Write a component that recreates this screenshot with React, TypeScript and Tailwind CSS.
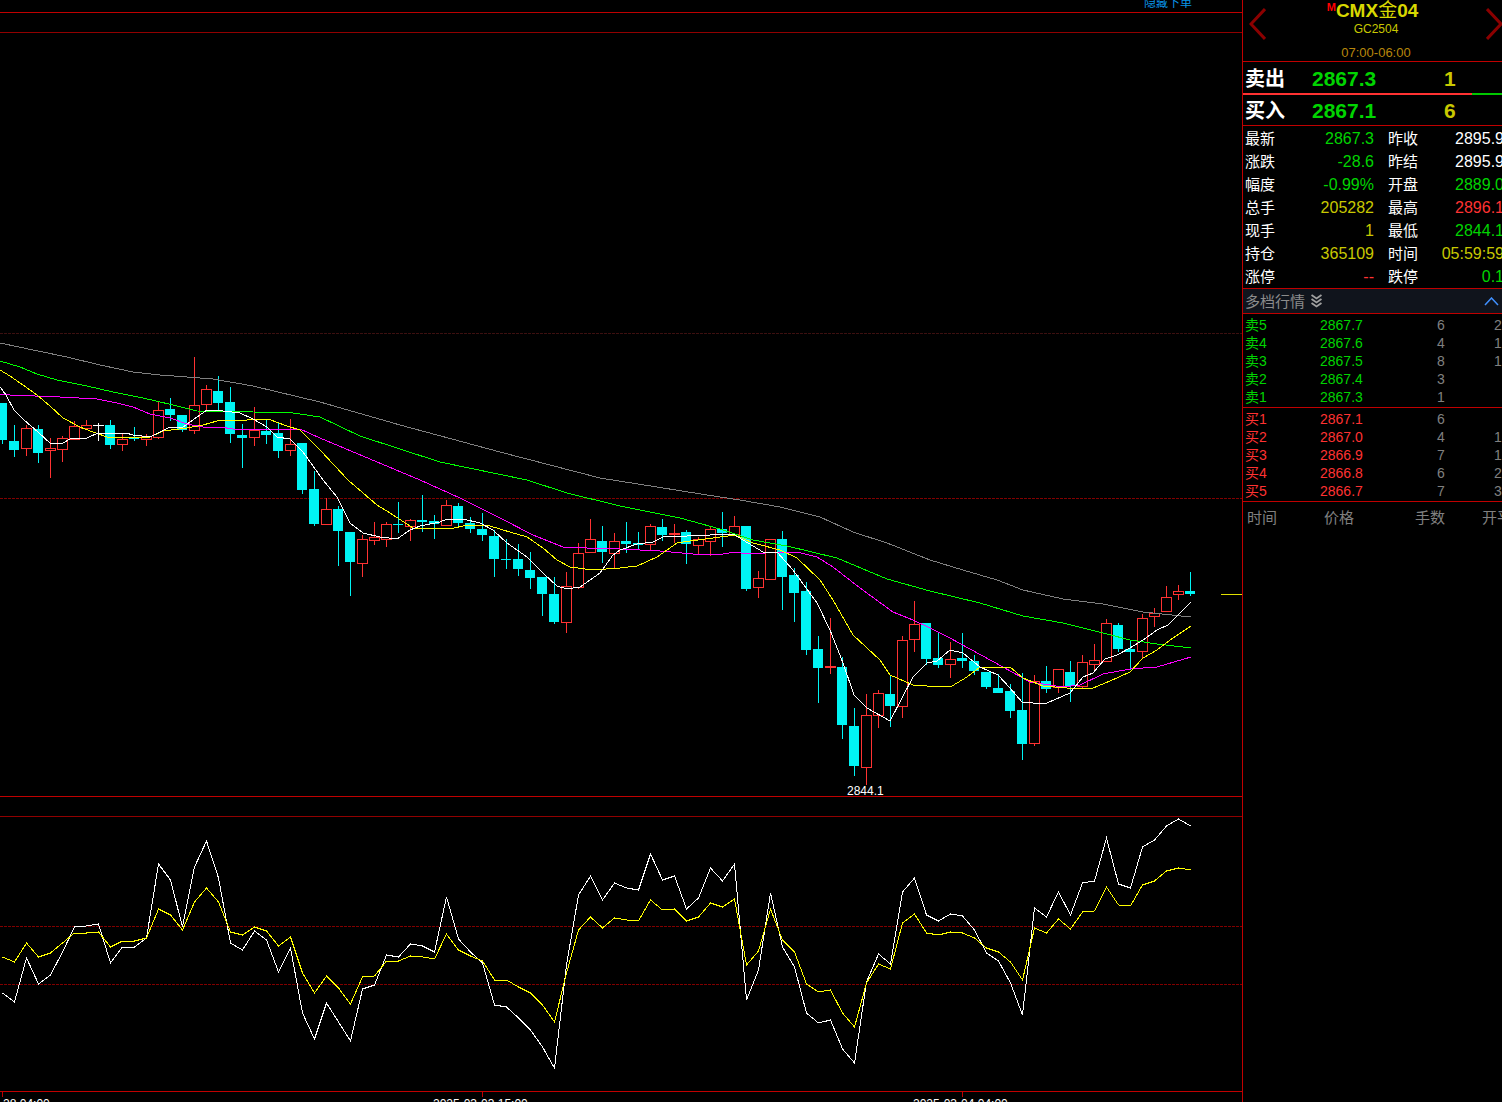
import React from "react";

const LATIN = "font-['Liberation_Sans','Noto_Sans_CJK_SC',sans-serif]";

type Candle = [string, number, number, number, number];
const candles: Candle[] = [
  ["c",403,440,403,444],["c",441,450,425,457],["r",428,449,425,456],["c",429,453,425,463],["r",448,451,438,478],
  ["r",438,450,436,462],["r",426,440,421,440],["r",425,429,420,429],["w",425,426,423,441],["c",425,445,420,449],
  ["r",439,445,434,451],["c",437,439,427,441],["r",436,440,434,446],["r",410,438,401,439],["c",409,415,398,421],
  ["c",415,430,415,432],["r",405,431,357,434],["r",389,405,385,411],["c",391,403,376,412],["c",402,434,387,443],
  ["c",435,438,424,468],["r",430,438,407,446],["c",431,435,420,444],["c",433,451,422,458],["r",444,451,419,456],
  ["c",443,490,443,494],["c",489,524,471,526],["r",509,525,498,525],["c",509,531,506,566],["c",532,562,532,596],
  ["r",539,564,535,577],["r",537,541,522,545],["r",524,540,522,547],["c",524,525,502,533],["r",520,527,519,541],
  ["c",520,522,495,532],["c",521,524,515,539],["r",505,526,500,526],["c",506,523,503,526],["c",523,529,517,533],
  ["c",529,535,513,541],["c",536,559,530,577],["c",559,560,539,569],["c",559,569,544,576],["c",570,578,552,589],
  ["c",577,594,577,616],["c",594,622,577,624],["r",586,623,572,633],["r",553,588,543,589],["r",539,553,519,553],
  ["c",541,552,526,563],["r",541,554,533,568],["c",541,544,522,553],["c",543,545,532,550],["r",526,545,524,550],
  ["c",527,535,519,541],["r",533,535,524,543],["c",532,544,530,564],["r",539,546,537,554],["r",529,542,526,556],
  ["c",529,533,512,547],["r",526,535,516,535],["c",526,589,526,591],["r",578,588,571,598],["r",539,580,539,580],
  ["c",539,577,531,610],["c",575,593,568,622],["c",591,650,582,655],["c",649,668,636,703],["r",666,667,618,674],
  ["c",667,725,657,739],["c",726,766,708,776],["r",715,768,694,785],["r",693,716,690,728],["c",694,706,675,727],
  ["r",640,707,636,718],["r",624,640,601,652],["c",623,659,623,665],["c",658,665,632,668],["r",659,665,642,678],
  ["c",658,661,633,668],["c",661,671,655,675],["c",672,687,672,689],["c",688,693,674,693],["c",691,711,684,718],
  ["c",710,744,673,760],["r",681,744,675,746],["c",681,689,666,693],["r",669,688,669,693],["c",672,686,661,702],
  ["r",662,687,655,689],["r",660,665,644,670],["r",623,662,619,662],["c",625,649,623,652],["c",649,652,640,670],
  ["r",618,652,614,658],["r",613,617,608,627],["r",597,612,586,612],["r",591,595,585,600],["c",591,594,572,596],
];

const maWhite = "0,387 6,395 14,410 24,420 38,432 51,444 63,443 70,439 87,438 98,433 126,433 133,435 150,437 170,427 183,427 197,417 207,410 223,411 240,413 253,419 267,427 277,437 290,439 303,452 323,480 337,497 350,523 363,533 380,537 397,539 410,530 420,526 440,522 447,519 463,519 480,523 493,530 507,543 527,557 543,573 557,586 567,589 580,587 600,573 613,555 620,550 637,544 653,542 663,537 687,536 733,534 743,540 763,552 777,552 793,570 817,603 830,630 843,663 854,695 867,708 890,721 913,677 927,663 937,661 950,650 963,653 980,667 998,675 1010,688 1022,702 1033,703 1047,703 1070,693 1083,677 1093,673 1105,659 1117,655 1130,648 1143,640 1157,630 1168,625 1191,602";
const maYellow = "0,370 10,376 23,385 37,395 50,406 63,418 80,427 93,432 110,438 123,437 150,437 163,431 187,428 203,425 217,421 247,420 268,419 287,426 300,430 320,450 348,480 363,493 377,505 390,513 413,528 450,529 467,525 487,525 503,530 527,537 543,548 557,560 570,567 593,570 620,568 637,566 657,557 677,543 690,541 713,538 735,535 753,543 780,550 797,558 820,580 833,600 853,635 880,660 890,675 913,685 940,687 952,686 967,677 980,667 1010,667 1023,678 1043,686 1067,688 1093,688 1110,681 1130,672 1143,658 1157,650 1170,640 1191,626";
const maMagenta = "0,394 10,395 60,397 97,399 117,403 133,407 150,414 170,418 187,424 203,427 220,427 233,429 300,429 320,438 420,480 460,498 500,518 533,535 563,547 587,548 620,549 660,551 693,554 723,554 735,552 747,554 783,552 797,552 817,557 833,567 860,588 893,612 913,620 930,628 950,638 970,649 1003,667 1030,682 1063,687 1080,685 1103,674 1130,669 1157,667 1191,657";
const maGreen = "0,361 20,367 37,374 57,380 87,386 113,392 143,398 173,405 197,411 253,412 293,413 320,417 360,436 440,462 527,480 567,493 620,506 680,518 720,529 753,540 787,546 837,558 887,579 930,591 980,603 1023,616 1063,623 1103,633 1130,640 1157,644 1191,648";
const maGray = "0,343 33,350 67,357 100,365 133,372 160,375 187,377 213,379 253,386 320,402 400,425 500,452 600,478 720,497 740,500 780,507 820,517 853,532 887,543 930,560 963,570 997,580 1023,590 1063,599 1103,604 1143,612 1191,617";

const oscWhite = [993,1002,958,984,975,952,927,926,924,963,947,947,938,864,880,927,867,841,878,943,950,931,940,972,948,1013,1039,1003,1022,1041,989,985,955,957,944,946,952,897,939,952,963,1005,1007,1018,1030,1047,1068,965,895,876,900,883,888,890,854,880,876,909,898,868,881,864,1000,970,893,947,967,1013,1023,1020,1049,1063,982,954,964,892,878,915,921,914,916,930,953,961,983,1015,908,917,892,915,883,881,838,884,888,847,840,826,819,826];
const oscYellow = [957,962,943,957,953,943,933,933,932,947,941,941,938,909,915,930,902,888,902,932,935,927,931,946,937,973,993,976,988,1004,977,976,961,961,956,957,959,934,950,956,961,980,980,987,993,1005,1022,973,930,917,928,918,920,921,900,910,909,921,917,903,907,899,965,951,909,940,952,984,992,990,1013,1027,983,964,969,923,914,933,935,932,933,938,948,952,962,980,928,933,919,929,912,911,887,905,906,885,881,871,868,870];
const toPts = (a: number[]) => a.map((y, i) => `${2.5 + 12 * i},${y}`).join(" ");

const RED = "#ff3232";
const CYAN = "#00f4f4";

function Chart() {
  return (
    <svg width={1242} height={1102} className="block" shapeRendering="crispEdges">
      <line x1={0} x2={1242} y1={12.5} y2={12.5} stroke="#c00000" />
      <line x1={0} x2={1242} y1={32.5} y2={32.5} stroke="#900000" />
      <line x1={0} x2={1242} y1={333.5} y2={333.5} stroke="#3c1010" strokeDasharray="3 1" />
      <line x1={0} x2={1242} y1={498.5} y2={498.5} stroke="#800000" strokeDasharray="3 1" />
      <line x1={0} x2={1242} y1={796.5} y2={796.5} stroke="#c00000" />
      <line x1={0} x2={1242} y1={816.5} y2={816.5} stroke="#900000" />
      <line x1={0} x2={1242} y1={926.5} y2={926.5} stroke="#800000" strokeDasharray="3 1" />
      <line x1={0} x2={1242} y1={984.5} y2={984.5} stroke="#800000" strokeDasharray="3 1" />
      <line x1={0} x2={1242} y1={1091.5} y2={1091.5} stroke="#c00000" />
      {[2, 482, 962].map((x) => (
        <line key={x} x1={x + 0.5} x2={x + 0.5} y1={1091} y2={1097} stroke="#c00000" />
      ))}
      {candles.map(([k, top, bot, wt, wb], i) => {
        const px = 2 + 12 * i;
        const color = k === "c" ? CYAN : k === "r" ? RED : "#ffffff";
        return (
          <g key={i}>
            <rect x={px} y={wt} width={1} height={Math.max(wb - wt, 1)} fill={color} />
            {k === "c" ? (
              <rect x={px - 5} y={top} width={10} height={Math.max(bot - top, 1)} fill={color} />
            ) : k === "r" ? (
              <rect x={px - 4.5} y={top + 0.5} width={10} height={Math.max(bot - top - 1, 1)} fill="#000" stroke={color} />
            ) : (
              <rect x={px - 5} y={top} width={11} height={1} fill={color} />
            )}
          </g>
        );
      })}
      <polyline points={maGray} fill="none" stroke="#808080" />
      <polyline points={maGreen} fill="none" stroke="#00ff00" />
      <polyline points={maMagenta} fill="none" stroke="#ff00ff" />
      <polyline points={maYellow} fill="none" stroke="#ffff00" />
      <polyline points={maWhite} fill="none" stroke="#ffffff" />
      <line x1={1221} x2={1242} y1={594.5} y2={594.5} stroke="#e0e000" />
      <polyline points={toPts(oscWhite)} fill="none" stroke="#ffffff" />
      <polyline points={toPts(oscYellow)} fill="none" stroke="#ffff00" />
    </svg>
  );
}

function Chevron({ flip }: { flip?: boolean }) {
  return (
    <svg width={17} height={32} viewBox="0 0 17 32" className="shrink-0 mt-[8px]">
      <polyline
        points={flip ? "1,1 15,16 1,31" : "16,1 2,16 16,31"}
        fill="none"
        stroke="#8b0000"
        strokeWidth={3}
      />
    </svg>
  );
}

const GREEN = "text-[#00d400]";
const REDT = "text-[#ff3232]";
const YEL = "text-[#c8c800]";

const stats: [string, string, string, string, string, string][] = [
  ["最新", "2867.3", GREEN, "昨收", "2895.9", "text-white"],
  ["涨跌", "-28.6", GREEN, "昨结", "2895.9", "text-white"],
  ["幅度", "-0.99%", GREEN, "开盘", "2889.0", GREEN],
  ["总手", "205282", YEL, "最高", "2896.1", REDT],
  ["现手", "1", YEL, "最低", "2844.1", GREEN],
  ["持仓", "365109", YEL, "时间", "05:59:59", YEL],
  ["涨停", "--", REDT, "跌停", "0.1", GREEN],
];

const asks: [string, string, string, string][] = [
  ["卖5", "2867.7", "6", "2"],
  ["卖4", "2867.6", "4", "1"],
  ["卖3", "2867.5", "8", "1"],
  ["卖2", "2867.4", "3", ""],
  ["卖1", "2867.3", "1", ""],
];
const bids: [string, string, string, string][] = [
  ["买1", "2867.1", "6", ""],
  ["买2", "2867.0", "4", "1"],
  ["买3", "2866.9", "7", "1"],
  ["买4", "2866.8", "6", "2"],
  ["买5", "2866.7", "7", "3"],
];

function Depth({ rows, color }: { rows: [string, string, string, string][]; color: string }) {
  return (
    <div className="flex flex-col">
      {rows.map((r) => (
        <div key={r[0]} className="flex h-[18px] w-[262px] shrink-0 items-center pl-[2px] text-[14px] leading-[18px]">
          <span className={`w-[75px] shrink-0 ${color}`}>{r[0]}</span>
          <span className={`w-[117px] shrink-0 ${color}`}>{r[1]}</span>
          <span className="w-[57px] shrink-0 text-[#808080]">{r[2]}</span>
          <span className="text-[#808080]">{r[3]}</span>
        </div>
      ))}
    </div>
  );
}

function QuoteRow({ label, price, qty }: { label: string; price: string; qty: string }) {
  return (
    <div className="flex h-full items-center pl-[2px] font-bold">
      <span className="w-[67px] shrink-0 text-[20px] text-white">{label}</span>
      <span className="w-[132px] shrink-0 text-[21px] text-[#00d400]">{price}</span>
      <span className="text-[21px] text-[#c8c800]">{qty}</span>
    </div>
  );
}

function Panel() {
  return (
    <div className="w-[260px] shrink-0 overflow-hidden border-l border-[#c00000]">
      <div className="flex h-[61px] w-[266px] items-start justify-between px-[6px]">
        <Chevron />
        <div className="flex flex-col items-center">
          <div className="mt-[1px] flex h-[20px] items-center pr-[7px] text-[19px] font-bold leading-[20px] text-[#d8d800]">
            <span className="-mt-[8px] text-[11px] text-[#ff0000]">M</span>
            <span>CMX</span>
            <span className="font-normal">金</span>
            <span>04</span>
          </div>
          <div className="mt-[1px] text-[12px] leading-[14px] text-[#c8c800]">GC2504</div>
          <div className="mt-[9px] text-[13px] leading-[16px] text-[#b8860b]">07:00-06:00</div>
        </div>
        <Chevron flip />
      </div>
      <div className="h-[32px] border-t border-[#c00000] pt-[2px]">
        <QuoteRow label="卖出" price="2867.3" qty="1" />
      </div>
      <div className="flex h-[2px]">
        <div className="w-[229px] bg-[#ff3232]" />
        <div className="flex-1 bg-[#00c800]" />
      </div>
      <div className="h-[30px] pt-[1px]">
        <QuoteRow label="买入" price="2867.1" qty="6" />
      </div>
      <div className="border-t border-[#c00000]">
        <div className="h-[1px]" />
        {stats.map((s) => (
          <div key={s[0]} className="flex h-[23px] w-[262px] shrink-0 items-center pl-[2px] leading-[23px]">
            <span className="w-[30px] shrink-0 text-[15px] text-white">{s[0]}</span>
            <span className={`w-[99px] shrink-0 text-right text-[16px] ${s[2]}`}>{s[1]}</span>
            <span className="ml-[14px] w-[30px] shrink-0 text-[15px] text-white">{s[3]}</span>
            <span className={`w-[86px] shrink-0 text-right text-[16px] ${s[5]}`}>{s[4]}</span>
          </div>
        ))}
      </div>
      <div className="flex h-[26px] items-center justify-between border-y border-[#c00000] bg-[#10141c] pl-[2px] pr-[3px]">
        <div className="flex items-center gap-[6px] text-[15px] text-[#8c8c8c]">
          <span className="mt-[3px]">多档行情</span>
          <svg width={11} height={14} viewBox="0 0 11 14" fill="none" stroke="#a0a0a0" strokeWidth={1.8}>
            <polyline points="0.5,1 5.5,4.5 10.5,1" />
            <polyline points="0.5,5 5.5,8.5 10.5,5" />
            <polyline points="0.5,9 5.5,12.5 10.5,9" />
          </svg>
        </div>
        <svg width={15} height={9} viewBox="0 0 15 9" fill="none" stroke="#4090ff" strokeWidth={1.5}>
          <polyline points="1,8 7.5,1 14,8" />
        </svg>
      </div>
      <div className="pt-[2px]">
        <Depth rows={asks} color="text-[#00d400]" />
      </div>
      <div className="mt-[1px] border-t border-[#c00000] pt-[2px]">
        <Depth rows={bids} color="text-[#ff3232]" />
      </div>
      <div className="mt-[1px] flex h-[32px] w-[262px] items-center border-t border-[#c00000] pl-[4px] pt-[2px] text-[15px] text-[#808080]">
        <span className="w-[77px] shrink-0">时间</span>
        <span className="w-[91px] shrink-0">价格</span>
        <span className="w-[67px] shrink-0">手数</span>
        <span className="shrink-0 whitespace-nowrap">开平</span>
      </div>
    </div>
  );
}

export default function App() {
  return (
    <div className={`flex h-[1102px] w-[1502px] overflow-hidden bg-black ${LATIN}`}>
      <div className="relative w-[1242px] shrink-0 overflow-hidden">
        <Chart />
        <div className="absolute left-[1144px] top-[-4px] text-[12px] leading-[14px] text-[#0a94e8]">隐藏下单</div>
        <div className="absolute left-[847px] top-[784px] text-[12px] leading-[14px] text-white">2844.1</div>
        <div className="absolute left-[-45px] top-[1097px] text-[12px] leading-[14px] text-white">2025-02-28 04:00</div>
        <div className="absolute left-[433px] top-[1097px] text-[12px] leading-[14px] text-white">2025-03-03 15:00</div>
        <div className="absolute left-[913px] top-[1097px] text-[12px] leading-[14px] text-white">2025-03-04 04:00</div>
      </div>
      <Panel />
    </div>
  );
}
